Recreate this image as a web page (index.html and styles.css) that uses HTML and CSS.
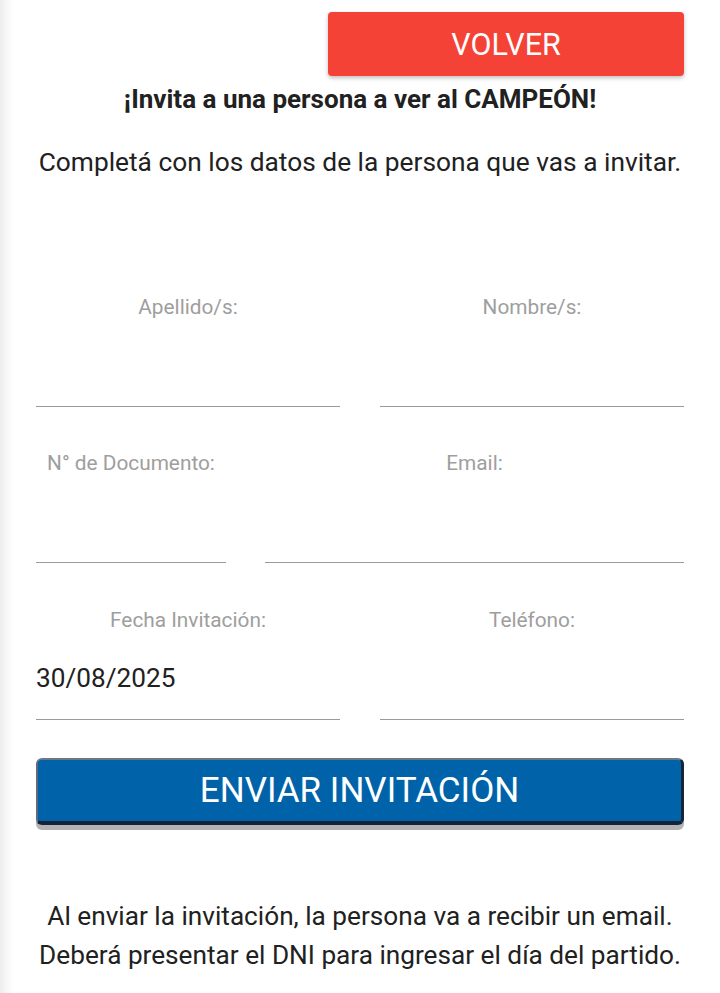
FILE: index.html
```html
<!DOCTYPE html>
<html lang="es">
<head>
<meta charset="utf-8">
<title>Invitar</title>
<link rel="stylesheet" href="styles.css">
</head>
<body>
<div class="page">
  <div class="top">
    <button class="btn-volver">VOLVER</button>
  </div>
  <h1 class="title">¡Invita a una persona a ver al CAMPEÓN!</h1>
  <p class="subtitle">Completá con los datos de la persona que vas a invitar.</p>

  <form class="form">
    <div class="row row-even">
      <label class="field">
        <span class="label">Apellido/s:</span>
        <input class="input" type="text">
      </label>
      <label class="field">
        <span class="label">Nombre/s:</span>
        <input class="input" type="text">
      </label>
    </div>
    <div class="row row-doc">
      <label class="field">
        <span class="label">N° de Documento:</span>
        <input class="input" type="text">
      </label>
      <label class="field">
        <span class="label">Email:</span>
        <input class="input" type="text">
      </label>
    </div>
    <div class="row row-even">
      <label class="field">
        <span class="label">Fecha Invitación:</span>
        <input class="input" type="text" value="30/08/2025">
      </label>
      <label class="field">
        <span class="label">Teléfono:</span>
        <input class="input" type="text">
      </label>
    </div>
    <button type="button" class="btn-enviar">ENVIAR INVITACIÓN</button>
  </form>

  <p class="note">Al enviar la invitación, la persona va a recibir un email.<br>Deberá presentar el DNI para ingresar el día del partido.</p>
</div>
</body>
</html>
```

FILE: styles.css
```css
html, body {
  margin: 0;
  padding: 0;
}
body {
  background: linear-gradient(to right, #ececec 0, #f6f6f6 6px, #ffffff 14px);
  font-family: Roboto, "Liberation Sans", sans-serif;
  color: #212121;
  min-height: 993px;
}
.page {
  padding: 12px 36px 0;
}
.top {
  display: flex;
  justify-content: flex-end;
}
.btn-volver {
  width: 356px;
  height: 64px;
  border: none;
  border-radius: 4px;
  background: #f44336;
  color: #fff;
  font-family: Roboto, sans-serif;
  font-size: 30.5px;
  box-shadow: 0 2px 4px rgba(0,0,0,0.25);
  padding: 0;
}
.title {
  margin: 8px 0 0;
  text-align: center;
  font-size: 26px;
  font-weight: 700;
  line-height: 30px;
  color: #212121;
  white-space: nowrap;
}
.subtitle {
  margin: 33px 0 0;
  text-align: center;
  font-size: 26.3px;
  line-height: 30px;
  white-space: nowrap;
}
.form {
  margin-top: 119px;
  display: flex;
  flex-direction: column;
}
.row {
  display: grid;
  margin-bottom: 45px;
}
.row-doc {
  margin-bottom: 46px;
}
.row:nth-child(3) {
  margin-bottom: 38px;
}
.row-even {
  grid-template-columns: 304px 304px;
  column-gap: 40px;
}
.row-doc {
  grid-template-columns: 190px 419px;
  column-gap: 39px;
}
.field {
  display: flex;
  flex-direction: column;
}
.label {
  text-align: center;
  font-size: 20.8px;
  line-height: 22px;
  color: #9e9e9e;
  white-space: nowrap;
}
.input {
  box-sizing: border-box;
  height: 89px;
  border: none;
  border-bottom: 1px solid #9a9a9a;
  padding: 6px 0 0;
  margin: 0;
  font-family: Roboto, sans-serif;
  font-size: 26.2px;
  line-height: 30px;
  color: #212121;
  background: transparent;
  outline: none;
  width: 100%;
}
.btn-enviar {
  box-sizing: border-box;
  height: 67px;
  width: 100%;
  border-radius: 6px;
  background: #0063a9;
  border-top: 2px solid #6b7784;
  border-left: 2px solid #5f6b78;
  border-right: 3px solid #15263a;
  border-bottom: 4px solid #13243a;
  box-shadow: 0 5px 0 #b3b3b6;
  color: #fff;
  font-family: Roboto, sans-serif;
  font-size: 35px;
  padding: 0;
}
.note {
  margin: 72px 0 0;
  text-align: center;
  font-size: 26.2px;
  line-height: 39px;
  white-space: nowrap;
}
```
